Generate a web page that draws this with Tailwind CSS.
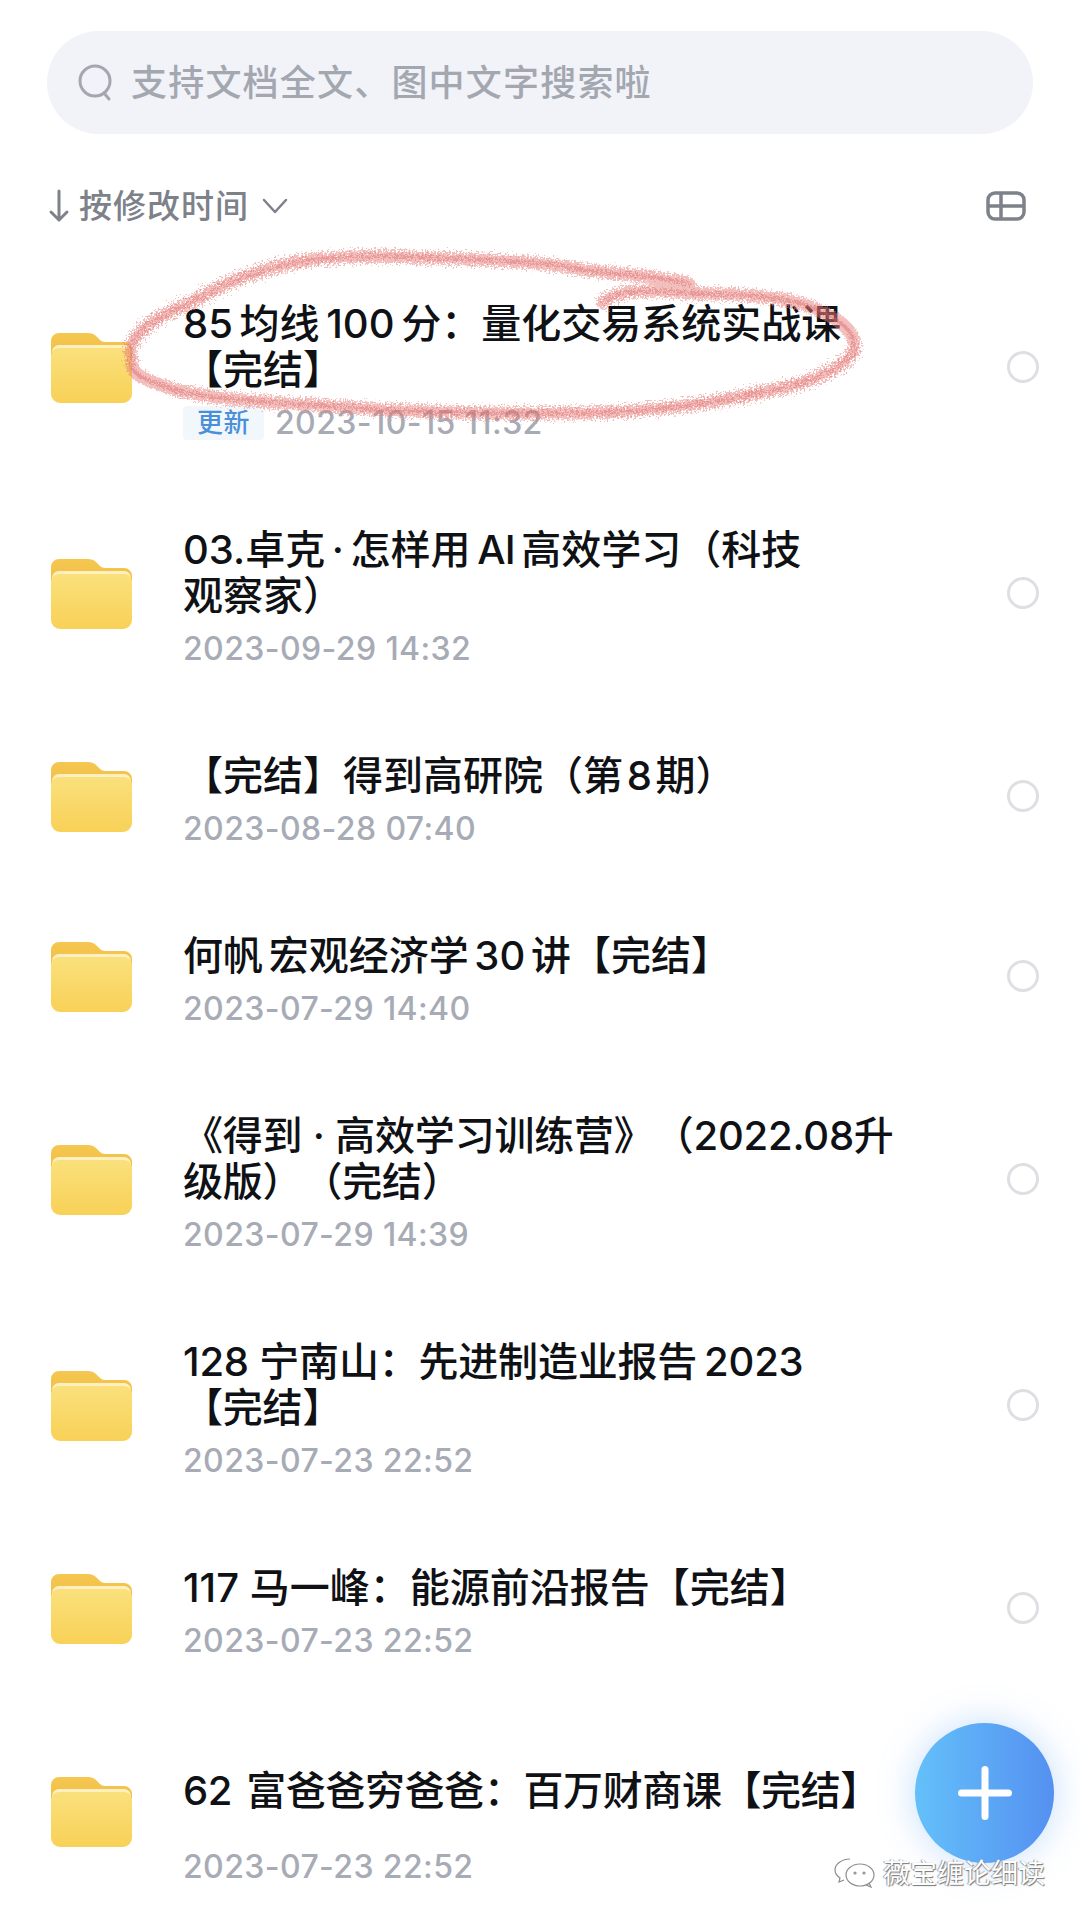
<!DOCTYPE html>
<html lang="zh-CN">
<head>
  <meta charset="UTF-8" />
  <title>文件列表</title>
  <meta name="viewport" content="width=device-width, initial-scale=1.0">
  <script src="https://cdn.jsdelivr.net/npm/@tailwindcss/browser@4"></script>
</head>
<body class="bg-white text-[#0f1115] font-['Inter','Noto_Sans_CJK_SC',sans-serif]">
<div class="relative w-[1080px] h-[1921px] overflow-hidden">
  <svg width="0" height="0" class="absolute">
    <defs>
      <linearGradient id="folderFront" x1="0" y1="0" x2="0" y2="1"><stop offset="0" stop-color="#fae07c"/><stop offset="1" stop-color="#f8d157"/></linearGradient>
      <linearGradient id="folderBack" x1="0" y1="0" x2="0" y2="1"><stop offset="0" stop-color="#f5c751"/><stop offset="1" stop-color="#efb93c"/></linearGradient>
      <symbol id="folder" viewBox="0 0 81 71">
        <path d="M0 9a8 8 0 0 1 8-8h29q5 0 8 3l4 4q2 2 5 2h19a8 8 0 0 1 8 8v20H0z" fill="url(#folderBack)"/>
        <path d="M1 20a7 7 0 0 1 7-7h65a7 7 0 0 1 7 7v4H1z" fill="#fdf0c0"/>
        <path d="M0 23a8 8 0 0 1 8-7h65a8 8 0 0 1 8 7v39a9 9 0 0 1-9 9H9a9 9 0 0 1-9-9z" fill="url(#folderFront)"/>
      </symbol>
      <filter id="crayon" x="-5%" y="-15%" width="110%" height="130%">
        <feTurbulence type="fractalNoise" baseFrequency="0.55" numOctaves="2" seed="4"/>
        <feDisplacementMap in="SourceGraphic" scale="16"/>
      </filter>
    </defs>
  </svg>

  <div class="mx-[47px] mt-[31px] h-[103px] rounded-[52px] bg-[#f1f3f8] flex items-center pl-[31px] gap-[17px]">
    <svg width="36" height="38" viewBox="0 0 36 38" fill="none" stroke="#a3a7b0" stroke-width="3"><circle cx="17" cy="17" r="15"/><path d="M26 29l5 6" stroke-linecap="round"/></svg>
    <span class="text-[36px] tracking-[1.2px] leading-none font-medium text-[#a3a7b0]">支持文档全文、图中文字搜索啦</span>
  </div>

  <div class="mx-[47px] mt-[47px] h-[50px] flex items-center text-[#7d818a]">
    <svg width="24" height="36" viewBox="0 0 24 36" fill="none" stroke="#7d818a" stroke-width="3" stroke-linecap="round" stroke-linejoin="round"><path d="M12 3v29M4 24l8 8 8-8"/></svg>
    <span class="ml-[8px] text-[33px] tracking-[1px] leading-none font-medium">按修改时间</span>
    <svg class="ml-[12px]" width="28" height="18" viewBox="0 0 28 18" fill="none" stroke="#7d818a" stroke-width="2.5" stroke-linecap="round" stroke-linejoin="round"><path d="M3 3l11 12L25 3"/></svg>
    <svg class="ml-auto mr-[7px]" width="40" height="30" viewBox="0 0 40 30" fill="none" stroke="#7d818a" stroke-width="3.5"><rect x="2" y="2" width="36" height="26" rx="7"/><path d="M2 15h36M15 2v26"/></svg>
  </div>

  <div class="mt-[23px]">
    <div class="h-[226px] flex items-center pl-[51px] pr-[41px]">
      <svg class="w-[81px] h-[71px] shrink-0"><use href="#folder"/></svg>
      <div class="ml-[51px] flex-1 whitespace-nowrap pt-[7px]">
        <div class="text-[40px] leading-[46px] font-medium [text-spacing-trim:space-all] [word-spacing:-4px]">85 均线 100 分：量化交易系统实战课<br>【完结】</div>
        <div class="mt-[13px] h-[34px] flex items-center text-[32px] tracking-[0.4px] leading-none font-medium text-[#a7abb5]">
          <span class="w-[81px] h-[34px] mr-[11px] rounded-[4px] bg-[#f2f7fb] text-[#4a90d9] text-[26px] flex items-center justify-center">更新</span>2023-10-15 11:32
        </div>
      </div>
      <span class="w-[32px] h-[32px] rounded-full border-[3px] border-[#dedfe2] shrink-0"></span>
    </div>

    <div class="h-[226px] flex items-center pl-[51px] pr-[41px]">
      <svg class="w-[81px] h-[71px] shrink-0"><use href="#folder"/></svg>
      <div class="ml-[51px] flex-1 whitespace-nowrap pt-[7px]">
        <div class="text-[40px] leading-[46px] font-medium [text-spacing-trim:space-all] [word-spacing:-4px]">03.卓克 · 怎样用 <span class="tracking-[-1px]">AI</span> 高效学习（科技<br>观察家）</div>
        <div class="mt-[13px] h-[34px] flex items-center text-[32px] tracking-[0.4px] leading-none font-medium text-[#a7abb5]">2023-09-29 14:32</div>
      </div>
      <span class="w-[32px] h-[32px] rounded-full border-[3px] border-[#dedfe2] shrink-0"></span>
    </div>

    <div class="h-[180px] flex items-center pl-[51px] pr-[41px]">
      <svg class="w-[81px] h-[71px] shrink-0"><use href="#folder"/></svg>
      <div class="ml-[51px] flex-1 whitespace-nowrap pt-[7px]">
        <div class="text-[40px] leading-[46px] font-medium [text-spacing-trim:space-all] [word-spacing:-7px]">【完结】得到高研院（第 8 期）</div>
        <div class="mt-[13px] h-[34px] flex items-center text-[32px] tracking-[0.4px] leading-none font-medium text-[#a7abb5]">2023-08-28 07:40</div>
      </div>
      <span class="w-[32px] h-[32px] rounded-full border-[3px] border-[#dedfe2] shrink-0"></span>
    </div>

    <div class="h-[180px] flex items-center pl-[51px] pr-[41px]">
      <svg class="w-[81px] h-[71px] shrink-0"><use href="#folder"/></svg>
      <div class="ml-[51px] flex-1 whitespace-nowrap pt-[7px]">
        <div class="text-[40px] leading-[46px] font-medium [text-spacing-trim:space-all] [word-spacing:-5px]">何帆 宏观经济学 30 讲【完结】</div>
        <div class="mt-[13px] h-[34px] flex items-center text-[32px] tracking-[0.4px] leading-none font-medium text-[#a7abb5]">2023-07-29 14:40</div>
      </div>
      <span class="w-[32px] h-[32px] rounded-full border-[3px] border-[#dedfe2] shrink-0"></span>
    </div>

    <div class="h-[226px] flex items-center pl-[51px] pr-[41px]">
      <svg class="w-[81px] h-[71px] shrink-0"><use href="#folder"/></svg>
      <div class="ml-[51px] flex-1 whitespace-nowrap pt-[7px]">
        <div class="text-[40px] leading-[46px] font-medium [text-spacing-trim:space-all] tracking-[-0.2px]">《得到 · 高效学习训练营》（2022.08升<br>级版）（完结）</div>
        <div class="mt-[13px] h-[34px] flex items-center text-[32px] tracking-[0.4px] leading-none font-medium text-[#a7abb5]">2023-07-29 14:39</div>
      </div>
      <span class="w-[32px] h-[32px] rounded-full border-[3px] border-[#dedfe2] shrink-0"></span>
    </div>

    <div class="h-[226px] flex items-center pl-[51px] pr-[41px]">
      <svg class="w-[81px] h-[71px] shrink-0"><use href="#folder"/></svg>
      <div class="ml-[51px] flex-1 whitespace-nowrap pt-[7px]">
        <div class="text-[40px] leading-[46px] font-medium [text-spacing-trim:space-all] tracking-[-0.2px]">128 宁南山：先进制造业报告<span class="ml-[7px]">2023</span><br>【完结】</div>
        <div class="mt-[13px] h-[34px] flex items-center text-[32px] tracking-[0.4px] leading-none font-medium text-[#a7abb5]">2023-07-23 22:52</div>
      </div>
      <span class="w-[32px] h-[32px] rounded-full border-[3px] border-[#dedfe2] shrink-0"></span>
    </div>

    <div class="h-[180px] flex items-center pl-[51px] pr-[41px]">
      <svg class="w-[81px] h-[71px] shrink-0"><use href="#folder"/></svg>
      <div class="ml-[51px] flex-1 whitespace-nowrap pt-[7px]">
        <div class="text-[40px] leading-[46px] font-medium [text-spacing-trim:space-all]">117 马一峰：能源前沿报告【完结】</div>
        <div class="mt-[13px] h-[34px] flex items-center text-[32px] tracking-[0.4px] leading-none font-medium text-[#a7abb5]">2023-07-23 22:52</div>
      </div>
      <span class="w-[32px] h-[32px] rounded-full border-[3px] border-[#dedfe2] shrink-0"></span>
    </div>

    <div class="h-[226px] flex items-center pl-[51px] pr-[41px]">
      <svg class="w-[81px] h-[71px] shrink-0"><use href="#folder"/></svg>
      <div class="ml-[51px] flex-1 whitespace-nowrap pt-[7px]">
        <div class="text-[40px] leading-[46px] font-medium [text-spacing-trim:space-all] tracking-[-0.4px] [word-spacing:4px] min-h-[92px] flex items-center">62 富爸爸穷爸爸：百万财商课【完结】</div>
        <div class="mt-[13px] h-[34px] flex items-center text-[32px] tracking-[0.4px] leading-none font-medium text-[#a7abb5]">2023-07-23 22:52</div>
      </div>
    </div>
  </div>

  <!-- red pencil circle drawn over the first row -->
  <svg class="absolute left-0 top-0 pointer-events-none" width="1080" height="460" viewBox="0 0 1080 460" fill="none">
    <g filter="url(#crayon)" stroke-linecap="round">
      <path d="M603 303C612 290 652 289 689 293C745 295 790 295 822 312C848 324 858 338 853 353C835 375 800 385 758 393C690 408 620 414 551 413C480 414 410 412 344 407C280 403 215 400 176 390C146 380 130 375 132 363C130 350 130 345 136 337C148 322 168 312 196 300C232 278 272 266 310 260C350 256 390 255 427 258C480 259 540 261 585 270C625 275 665 277 689 284" stroke="#e87f7d" stroke-opacity=".5" stroke-width="13"/>
      <path d="M603 303C612 290 652 289 689 293C745 295 790 295 822 312C848 324 858 338 853 353C835 375 800 385 758 393C690 408 620 414 551 413C480 414 410 412 344 407C280 403 215 400 176 390C146 380 130 375 132 363C130 350 130 345 136 337C148 322 168 312 196 300C232 278 272 266 310 260C350 256 390 255 427 258C480 259 540 261 585 270C625 275 665 277 689 284" stroke="#d9605e" stroke-opacity=".4" stroke-width="4" stroke-dasharray="2 3"/>
    </g>
  </svg>

  <!-- floating add button -->
  <div class="absolute left-[915px] top-[1723px] w-[139px] h-[140px] rounded-full bg-gradient-to-r from-[#64c0f9] to-[#5590f1] shadow-[0_0_36px_rgba(90,160,245,0.35)] flex items-center justify-center">
    <svg width="54" height="54" viewBox="0 0 54 54" stroke="#fff" stroke-width="7" stroke-linecap="round"><path d="M27 3.5v47M3.5 27h47"/></svg>
  </div>

  <!-- watermark -->
  <div class="absolute left-[833px] top-[1857px] flex items-center gap-[6px]">
    <svg width="44" height="32" viewBox="0 0 44 32" fill="none" stroke="#8d8d8d" stroke-width="1.2"><path d="M17 2C9 2 2 7 2 13c0 4 2 6 5 8l-1 4 5-2"/><ellipse cx="27" cy="18" rx="14" ry="11"/><path d="M36 26l2 4-5-2"/><circle cx="22" cy="16" r="1"/><circle cx="31" cy="16" r="1"/></svg>
    <span class="text-[27px] leading-none text-white [text-shadow:1px_1px_1px_#777,-1px_0_1px_#999]">薇宝缠论细读</span>
  </div>
</div>
</body>
</html>
